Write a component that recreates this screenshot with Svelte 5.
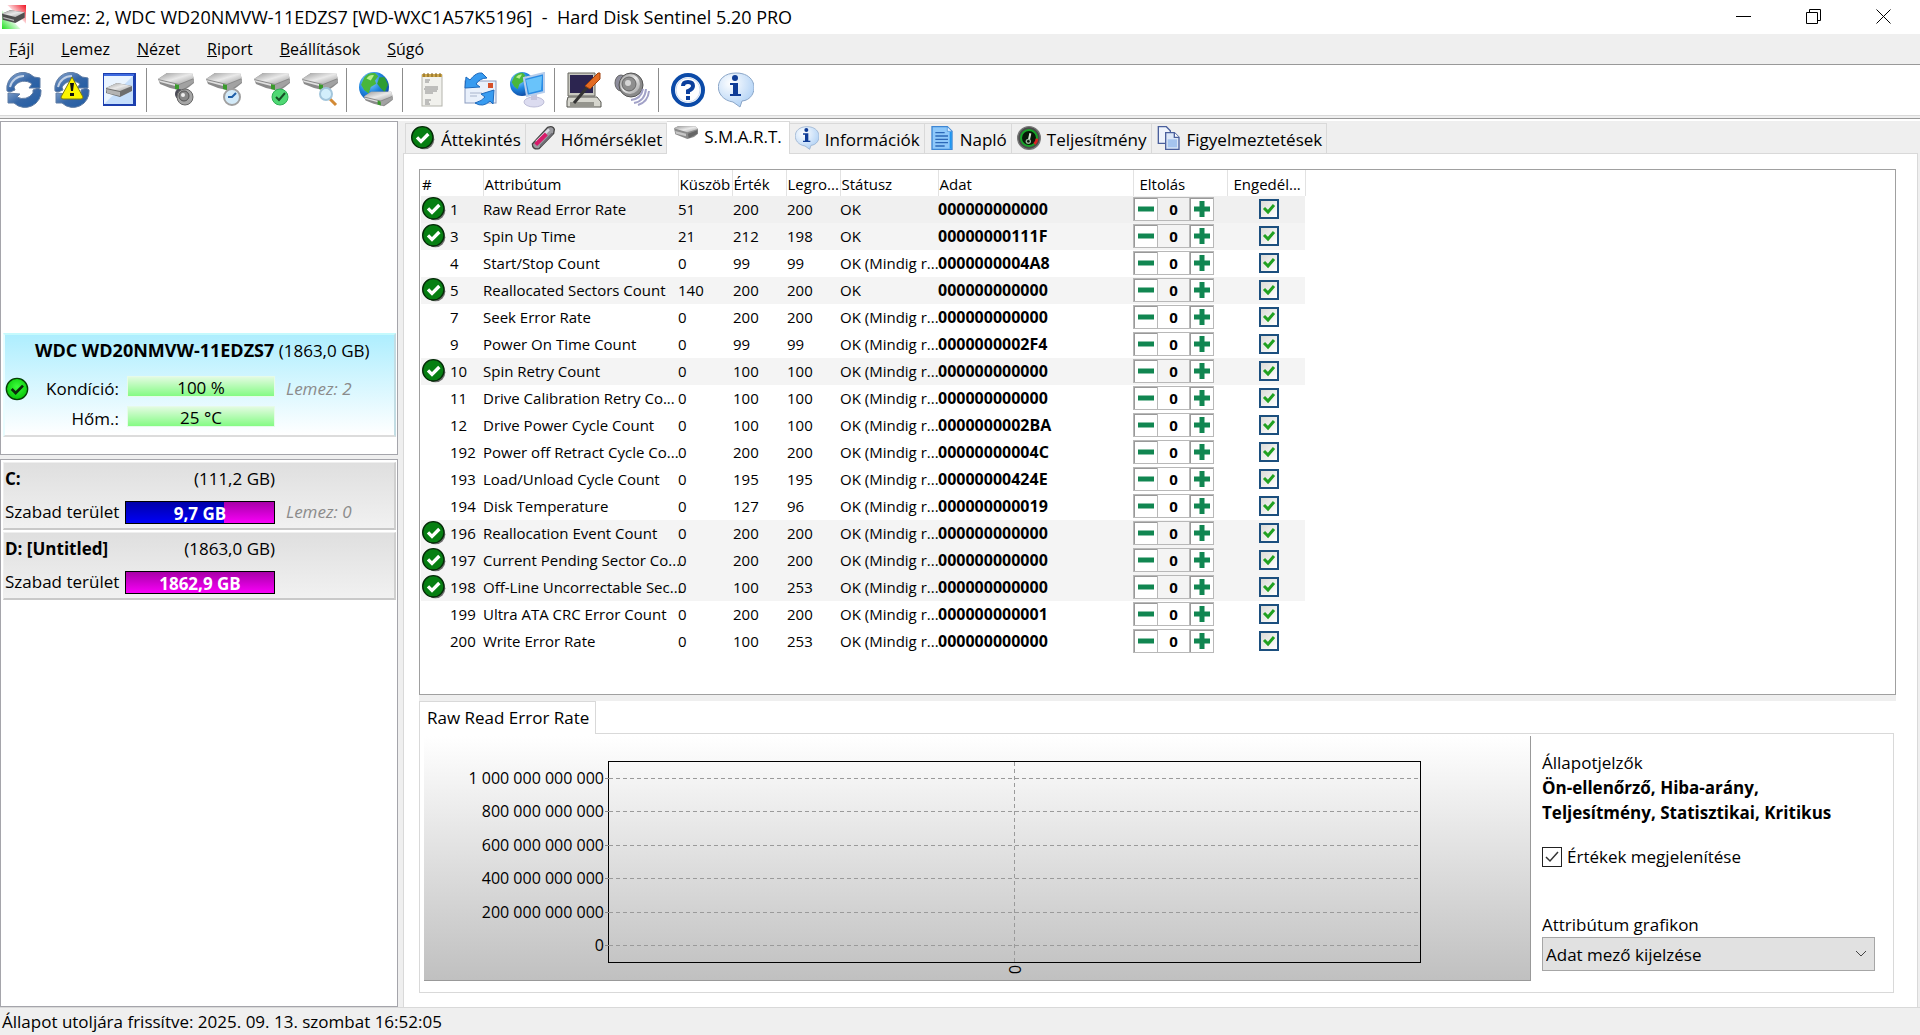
<script>
  const menu = ['Fájl', 'Lemez', 'Nézet', 'Riport', 'Beállítások', 'Súgó'];

  const toolbar = [
    [
      { icon: 'refresh', label: 'Frissítés' },
      { icon: 'refresh-warning', label: 'Újraellenőrzés' },
      { icon: 'disk-window', label: 'Lemez' }
    ],
    [
      { icon: 'disk-sound', label: 'Lemez hang' },
      { icon: 'disk-clock', label: 'Rövid teszt' },
      { icon: 'disk-check', label: 'Teljes teszt' },
      { icon: 'disk-search', label: 'Felület teszt' }
    ],
    [{ icon: 'globe-disk', label: 'Online' }],
    [
      { icon: 'report', label: 'Riport' },
      { icon: 'mail', label: 'Riport küldése' },
      { icon: 'network', label: 'Hálózat' }
    ],
    [
      { icon: 'settings', label: 'Beállítások' },
      { icon: 'speaker', label: 'Hang' }
    ],
    [
      { icon: 'help', label: 'Súgó' },
      { icon: 'info', label: 'Névjegy' }
    ]
  ];

  const tabs = [
    { icon: 'ok', label: 'Áttekintés' },
    { icon: 'thermo', label: 'Hőmérséklet' },
    { icon: 'disk', label: 'S.M.A.R.T.' },
    { icon: 'info', label: 'Információk' },
    { icon: 'log', label: 'Napló' },
    { icon: 'gauge', label: 'Teljesítmény' },
    { icon: 'copy', label: 'Figyelmeztetések' }
  ];
  let activeTab = $state('S.M.A.R.T.');

  const always = 'OK (Mindig r...';
  let attributes = $state([
    { id: 1, name: 'Raw Read Error Rate', threshold: 51, value: 200, worst: 200, status: 'OK', data: '000000000000', critical: true },
    { id: 3, name: 'Spin Up Time', threshold: 21, value: 212, worst: 198, status: 'OK', data: '00000000111F', critical: true },
    { id: 4, name: 'Start/Stop Count', threshold: 0, value: 99, worst: 99, status: always, data: '0000000004A8' },
    { id: 5, name: 'Reallocated Sectors Count', threshold: 140, value: 200, worst: 200, status: 'OK', data: '000000000000', critical: true },
    { id: 7, name: 'Seek Error Rate', threshold: 0, value: 200, worst: 200, status: always, data: '000000000000' },
    { id: 9, name: 'Power On Time Count', threshold: 0, value: 99, worst: 99, status: always, data: '0000000002F4' },
    { id: 10, name: 'Spin Retry Count', threshold: 0, value: 100, worst: 100, status: always, data: '000000000000', critical: true },
    { id: 11, name: 'Drive Calibration Retry Co...', threshold: 0, value: 100, worst: 100, status: always, data: '000000000000' },
    { id: 12, name: 'Drive Power Cycle Count', threshold: 0, value: 100, worst: 100, status: always, data: '0000000002BA' },
    { id: 192, name: 'Power off Retract Cycle Co...', threshold: 0, value: 200, worst: 200, status: always, data: '00000000004C' },
    { id: 193, name: 'Load/Unload Cycle Count', threshold: 0, value: 195, worst: 195, status: always, data: '00000000424E' },
    { id: 194, name: 'Disk Temperature', threshold: 0, value: 127, worst: 96, status: always, data: '000000000019' },
    { id: 196, name: 'Reallocation Event Count', threshold: 0, value: 200, worst: 200, status: always, data: '000000000000', critical: true },
    { id: 197, name: 'Current Pending Sector Co...', threshold: 0, value: 200, worst: 200, status: always, data: '000000000000', critical: true },
    { id: 198, name: 'Off-Line Uncorrectable Sec...', threshold: 0, value: 100, worst: 253, status: always, data: '000000000000', critical: true },
    { id: 199, name: 'Ultra ATA CRC Error Count', threshold: 0, value: 200, worst: 200, status: always, data: '000000000001' },
    { id: 200, name: 'Write Error Rate', threshold: 0, value: 100, worst: 253, status: always, data: '000000000000' }
  ].map((a) => ({ ...a, offset: 0, enabled: true })));

  let selected = $state(0);
  let showValues = $state(true);

  const drives = [
    { name: 'C:', size: '(111,2 GB)', free: '9,7 GB', used: 66, disk: 'Lemez: 0' },
    { name: 'D: [Untitled]', size: '(1863,0 GB)', free: '1862,9 GB', used: 0, disk: '' }
  ];

  const axis = ['1 000 000 000 000', '800 000 000 000', '600 000 000 000', '400 000 000 000', '200 000 000 000', '0'];
  const gridY = axis.map((_, i) => Math.round(16 + i * 33.4) + 0.5);
</script>

{#snippet drive()}
  <path d="M0 7 L9 1 H34 L36 8 V11 L31 15 L25 19 L12 16 L2 12 Z" fill="#8a8a8a" />
  <path d="M0 7 L9 1 H34 L36 6 L21 12 Z" fill="url(#g-metal)" />
  <path d="M0 8 L21 13 V15 L2 10 Z" fill="#e0e0e0" />
  <path d="M21 13 L36 7 V10 L24 18 L21 18 Z" fill="#a2a2a2" />
  <path d="M17 12 l4 1 v5 l-4 -1z" fill="#3a9a2c" />
{/snippet}

{#snippet arrows()}
  <path d="M1 19 A16 16 0 0 1 28 5 L34 6 V16 H23 L26 12 A12 12 0 0 0 8 15 L9 18 L4 20 Z" fill="url(#g-blue)" stroke="#5f7ca4" stroke-width="1" />
  <path d="M35 18 A16 16 0 0 1 8 31 L2 31 V21 L14 22 L11 25 A12 12 0 0 0 27 21 L27 18 L32 16 Z" fill="url(#g-blue)" stroke="#5f7ca4" stroke-width="1" />
  <path d="M4 15 A14 14 0 0 1 18 4" fill="none" stroke="#c3d2e6" stroke-width="2" />
{/snippet}

{#snippet globe(cx, cy, r)}
  <circle {cx} {cy} {r} fill="url(#g-globe)" />
  <g transform="translate({cx - r} {cy - r}) scale({r / 14})">
    <path d="M5 5 Q9 0 15 1 L18 4 L15 8 L16 11 L11 14 L9 20 L5 17 L2 12 Z" fill="#49b73c" />
    <path d="M19 5 L24 5 L27 12 L24 19 L20 15 L17 11 Z" fill="#2f9d33" />
    <path d="M7 6 Q10 2 14 3 L11 8 Z" fill="#b8ee8e" />
  </g>
{/snippet}

{#snippet icon(name)}
  <svg class="icon" viewBox="0 0 36 36" aria-hidden="true">
    {#if name === 'refresh'}
      {@render arrows()}
    {:else if name === 'refresh-warning'}
      {@render arrows()}
      <path d="M18 5 L29 25 Q29 27 27 27 H9 Q7 27 7 25 Z" fill="#fdf500" stroke="#7c7a12" stroke-width="1" />
      <path d="M16 11 h4 l-1 8 h-2z" fill="#111" />
      <rect x="16" y="21" width="4" height="3" fill="#111" />
    {:else if name === 'disk-window'}
      <rect x="1" y="1" width="33" height="33" fill="#1c3fae" />
      <rect x="2" y="2" width="30" height="2" fill="#3f6be0" />
      <rect x="2" y="4" width="29" height="28" fill="#c5defb" />
      <path d="M2 4 H31 L2 32Z" fill="#eaf4ff" />
      <path d="M4 16 L15 11 L30 14 V19 L18 25 L4 21Z" fill="#6e6e6e" />
      <path d="M4 16 L15 11 L30 14 L18 19Z" fill="url(#g-metal)" />
      <path d="M4 17 L18 20 V24 L5 21Z" fill="#b3b3b3" />
    {:else if name === 'disk-sound'}
      {@render drive()}
      <ellipse cx="21" cy="22" rx="4" ry="5" fill="#4a4a55" />
      <circle cx="27" cy="25" r="8" fill="#a6a6a6" stroke="#666" />
      <circle cx="26" cy="24" r="5" fill="#888" stroke="#555" />
      <circle cx="25" cy="23" r="2" fill="#eee" />
    {:else if name === 'disk-clock'}
      {@render drive()}
      <circle cx="26" cy="25" r="8" fill="#d3eaf8" stroke="#a0a0a0" stroke-width="2" />
      <path d="M30 21 L26 25 H22" fill="none" stroke="#1f5fa8" stroke-width="2" />
    {:else if name === 'disk-check'}
      {@render drive()}
      <circle cx="26" cy="25" r="8" fill="#4fd873" stroke="#2fae55" />
      <path d="M22 25 L25 28 L31 21" fill="none" stroke="#174f26" stroke-width="2" />
    {:else if name === 'disk-search'}
      {@render drive()}
      <path d="M28 27 L34 33" stroke="#d38a35" stroke-width="3" />
      <circle cx="24" cy="22" r="6" fill="#d2effc" stroke="#a3c6dc" stroke-width="2" />
    {:else if name === 'globe-disk'}
      {@render globe(16, 15, 15)}
      <g transform="translate(6 19) scale(0.8)">{@render drive()}</g>
    {:else if name === 'report'}
      <rect x="8" y="3" width="20" height="31" fill="#f1f1ed" stroke="#b4b4ac" />
      <path d="M8 2 H28 V5 H8Z" fill="#cda74c" />
      <path d="M10 1v4M14 1v4M18 1v4M22 1v4M26 1v4" stroke="#7a5c1a" />
      <path d="M11 8h5M11 10h4M11 15h13M10 17h14M11 19h12M11 21h8M11 28h6M11 30h4M11 32h5" stroke="#8a8a8a" />
    {:else if name === 'mail'}
      <rect x="3" y="9" width="31" height="22" fill="#e9f0fb" stroke="#8b9cc0" />
      <rect x="26" y="11" width="5" height="5" fill="#d6502a" />
      <path d="M8 21h12M8 24h7" stroke="#a8b4cc" />
      <path d="M3 16 L4 5 L8 8 Q14 0 20 1 L25 6 Q18 6 14 12 L18 15 Z" fill="#379bf0" stroke="#1c69bd" />
      <path d="M32 18 L19 22 L23 25 Q20 29 13 31 Q21 36 28 29 L31 32 Z" fill="#379bf0" stroke="#1c69bd" />
    {:else if name === 'network'}
      {@render globe(12, 12, 12)}
      <ellipse cx="24" cy="30" rx="10" ry="5" fill="#dcdcf0" stroke="#bdbdd8" />
      <path d="M21 22 h6 v6 h-6z" fill="#c4c4dd" />
      <path d="M14 6 L34 1 V20 L17 24 Z" fill="#2b8de6" stroke="#b8cdea" stroke-width="2" />
      <path d="M16 8 L32 4 L31 18 L19 21 Z" fill="#69c3fa" />
    {:else if name === 'settings'}
      <path d="M2 1 H29 V24 H2Z" fill="#c8c8c0" stroke="#66665f" />
      <path d="M4 3 H27 V21 H4Z" fill="#2c2550" />
      <path d="M2 25 H31 L35 30 V35 H1 V29Z" fill="#d6d6ce" stroke="#55554f" />
      <path d="M4 31h24M4 33h24" stroke="#55554f" />
      <path d="M8 31 L24 12" stroke="#333" stroke-width="3" />
      <path d="M19 14 L32 1 L34 1 V7 L24 17Z" fill="#e36b22" stroke="#a0400c" />
    {:else if name === 'speaker'}
      <ellipse cx="7" cy="11" rx="6" ry="8" fill="#8d8d9c" stroke="#666" />
      <ellipse cx="8" cy="11" rx="3" ry="5" fill="#c9c9da" />
      <circle cx="17" cy="13" r="12" fill="#8a8a8a" stroke="#555" />
      <circle cx="16" cy="12" r="10" fill="url(#g-metal)" />
      <circle cx="15" cy="12" r="7" fill="#8e8e8e" stroke="#666" />
      <circle cx="14" cy="11" r="3" fill="#d6d6d6" />
      <path d="M17 28 Q27 27 29 17 M20 31 Q31 29 32 17 M24 33 Q34 30 35 19" fill="none" stroke="#a2a2c8" stroke-width="2" />
    {:else if name === 'help'}
      <circle cx="18" cy="18" r="15" fill="#fff" stroke="#0b4aa8" stroke-width="4" />
      <circle cx="18" cy="18" r="12" fill="none" stroke="#cddcf2" stroke-width="1" />
      <path d="M13 14 Q13 10 18 10 Q23 10 23 14 Q23 17 18 19 V22" fill="none" stroke="#0b3f9c" stroke-width="4" />
      <rect x="16" y="24" width="4" height="4" fill="#0b3f9c" />
    {:else if name === 'info'}
      <path d="M18 1 C42 1 40 28 24 29 L22 35 L15 30 C-5 27 -5 1 18 1Z" fill="url(#g-bubble)" stroke="#8ba6c8" />
      <circle cx="17" cy="6" r="3" fill="#0f3c96" />
      <path d="M12 11 H20 V22 H23 V24 H12 V22 H15 V13 H12Z" fill="#0f3c96" />
    {:else if name === 'ok'}
      <circle cx="20" cy="20" r="15" fill="#6d6d6d" />
      <circle cx="17" cy="17" r="16" fill="#067f12" stroke="#052b08" stroke-width="2" />
      <path d="M9 17 L15 23 L26 12" fill="none" stroke="#fff" stroke-width="5" />
    {:else if name === 'disk-ok'}
      <circle cx="18" cy="18" r="16" fill="url(#g-green)" stroke="#053f05" stroke-width="2" />
      <path d="M10 18 L16 24 L27 13" fill="none" stroke="#0b2a0b" stroke-width="4" />
    {:else if name === 'thermo'}
      <path d="M2 27 L25 2 Q33 -1 35 5 L34 11 L12 34 Q2 36 2 27Z" fill="#9b9ba0" stroke="#444" stroke-width="2" />
      <path d="M8 24 L27 5" stroke="#dcdce4" stroke-width="4" />
      <path d="M7 28 L23 12" stroke="#d81b6a" stroke-width="6" />
      <path d="M14 30 L32 11" stroke="#6d6d74" stroke-width="3" />
    {:else if name === 'disk'}
      <path d="M0 8 L6 5 H32 L36 9 V16 L30 21 L20 24 L2 17Z" fill="#8b8b8b" />
      <path d="M0 8 L6 5 H32 L36 9 L20 14Z" fill="url(#g-metal)" />
      <path d="M2 12 L18 16 V20 L3 16Z" fill="#c6c6c6" />
      <path d="M21 16 L35 11 V16 L22 23Z" fill="#666" />
    {:else if name === 'log'}
      <path d="M3 1 H26 L33 8 V35 H3Z" fill="#8ec8fa" stroke="#3d86d4" stroke-width="2" />
      <path d="M26 1 V8 H33Z" fill="#e4f3ff" stroke="#3d86d4" />
      <path d="M8 10h14M8 15h19M8 20h19M8 25h19M8 30h14" stroke="#2c68b8" stroke-width="2" />
      <path d="M31 9 V34" stroke="#1f96f0" stroke-width="3" />
    {:else if name === 'gauge'}
      <circle cx="18" cy="18" r="17" fill="#4b4b4b" stroke="#777" stroke-width="2" />
      <circle cx="18" cy="18" r="12" fill="#081808" stroke="#16a628" stroke-width="3" />
      <path d="M26 27 A12 12 0 0 0 30 19" fill="none" stroke="#e02020" stroke-width="4" />
      <path d="M17 25 L20 11" stroke="#d9ead9" stroke-width="3" />
      <circle cx="17" cy="23" r="4" fill="#9db59d" />
      <circle cx="17" cy="23" r="2" fill="#081808" />
    {:else if name === 'copy'}
      <path d="M2 1 H14 L20 7 V26 H2Z" fill="#eef3fc" stroke="#4a5f9c" stroke-width="2" />
      <path d="M13 10 H26 L33 17 V35 H13Z" fill="#dce7f8" stroke="#4a5f9c" stroke-width="2" />
      <path d="M26 10 V17 H33" fill="#fff" stroke="#4a5f9c" stroke-width="2" />
      <path d="M16 20 H30 V32 H16Z" fill="#a5c4ee" />
    {:else if name === 'app'}
      <rect width="36" height="36" fill="#fff" />
      <path d="M8 0 H36 V28 Z" fill="url(#g-red)" />
      <path d="M0 8 V36 H28 Z" fill="url(#g-lime)" />
      <path d="M0 13 L12 8 L34 11 V19 L20 27 L1 22Z" fill="#4f4f4f" />
      <path d="M0 13 L12 8 L34 11 L20 18Z" fill="url(#g-metal)" />
      <path d="M2 18 L18 22 V24 L2 20Z" fill="#bbb" />
    {/if}
  </svg>
{/snippet}

<svg class="defs" aria-hidden="true">
  <defs>
    <linearGradient id="g-metal" x1="0" y1="0" x2="1" y2="1">
      <stop offset="0" stop-color="#9a9a9a" />
      <stop offset="0.5" stop-color="#e9e9e9" />
      <stop offset="1" stop-color="#9a9a9a" />
    </linearGradient>
    <linearGradient id="g-blue" x1="0" y1="0" x2="1" y2="1">
      <stop offset="0" stop-color="#8eaad0" />
      <stop offset="0.5" stop-color="#3566a6" />
      <stop offset="1" stop-color="#1f5ca4" />
    </linearGradient>
    <radialGradient id="g-globe" cx="0.35" cy="0.3" r="0.8">
      <stop offset="0" stop-color="#9adcff" />
      <stop offset="0.5" stop-color="#1f86e0" />
      <stop offset="1" stop-color="#0b3f98" />
    </radialGradient>
    <radialGradient id="g-bubble" cx="0.35" cy="0.3" r="0.8">
      <stop offset="0" stop-color="#fff" />
      <stop offset="1" stop-color="#a9cdf4" />
    </radialGradient>
    <radialGradient id="g-green" cx="0.5" cy="0.4" r="0.6">
      <stop offset="0" stop-color="#3cff3c" />
      <stop offset="1" stop-color="#06c406" />
    </radialGradient>
    <linearGradient id="g-red" x1="0" y1="1" x2="1" y2="0">
      <stop offset="0.4" stop-color="#fff" />
      <stop offset="1" stop-color="#f01020" />
    </linearGradient>
    <linearGradient id="g-lime" x1="1" y1="0" x2="0" y2="1">
      <stop offset="0.4" stop-color="#fff" />
      <stop offset="1" stop-color="#20e020" />
    </linearGradient>
  </defs>
</svg>

<div class="window">
  <header class="titlebar">
    <span class="app-icon">{@render icon('app')}</span>
    <h1>Lemez: 2, WDC WD20NMVW-11EDZS7 [WD-WXC1A57K5196] &nbsp;-&nbsp; Hard Disk Sentinel 5.20 PRO</h1>
    <div class="window-buttons">
      <button aria-label="Kis méret">
        <svg viewBox="0 0 16 16"><path d="M0 7.5h15" /></svg>
      </button>
      <button aria-label="Előző méret">
        <svg viewBox="0 0 16 16"><path d="M.5 3.5h11v11h-11zM3.5 3.5v-3h11v11h-3" /></svg>
      </button>
      <button aria-label="Bezárás">
        <svg viewBox="0 0 16 16"><path d="M.5.5l14 14M14.5.5l-14 14" /></svg>
      </button>
    </div>
  </header>

  <nav class="menu">
    {#each menu as item}
      <button><u>{item[0]}</u>{item.slice(1)}</button>
    {/each}
  </nav>

  <div class="toolbar">
    {#each toolbar as group}
      <div class="tool-group">
        {#each group as tool}
          <button aria-label={tool.label}>{@render icon(tool.icon)}</button>
        {/each}
      </div>
    {/each}
  </div>
  <div class="toolbar-edge"></div>

  <div class="content">
    <aside>
      <section class="disks">
        <div class="disk-card">
          <p class="disk-title"><b>WDC WD20NMVW-11EDZS7</b> (1863,0 GB)</p>
          <div class="disk-info">
            <span class="disk-state">{@render icon('disk-ok')}</span>
            <span class="label">Kondíció:</span>
            <span class="meter">100 %</span>
            <i>Lemez: 2</i>
            <span class="label temp">Hőm.:</span>
            <span class="meter">25 °C</span>
          </div>
        </div>
      </section>
      <section class="drives">
        {#each drives as d}
          <div class="drive">
            <div class="drive-head"><b>{d.name}</b><span>{d.size}</span></div>
            <div class="drive-row">
              <span class="drive-label">Szabad terület</span>
              <span class="space">
                <span class="used" style="width: {d.used}%"></span>
                <b>{d.free}</b>
              </span>
              <i>{d.disk}</i>
            </div>
          </div>
        {/each}
      </section>
    </aside>

    <main>
      <div class="tabs" role="tablist">
        {#each tabs as tab}
          <button
            role="tab"
            class:active={tab.label === activeTab}
            aria-selected={tab.label === activeTab}
            onclick={() => (activeTab = tab.label)}
          >
            {@render icon(tab.icon)}
            <span>{tab.label}</span>
          </button>
        {/each}
      </div>

      <div class="page">
        <div class="list">
          <table>
            <colgroup>
              <col class="c-id" />
              <col class="c-name" />
              <col class="c-num" />
              <col class="c-num" />
              <col class="c-num" />
              <col class="c-status" />
              <col class="c-data" />
              <col class="c-offset" />
              <col class="c-enabled" />
            </colgroup>
            <thead>
              <tr>
                <th>#</th>
                <th>Attribútum</th>
                <th>Küszöb</th>
                <th>Érték</th>
                <th>Legro...</th>
                <th>Státusz</th>
                <th>Adat</th>
                <th class="inset">Eltolás</th>
                <th class="inset">Engedél...</th>
              </tr>
            </thead>
            <tbody>
              {#each attributes as a, i}
                <tr class:critical={a.critical} class:selected={i === selected} onclick={() => (selected = i)}>
                  <td>
                    <div class="id">
                      <span class="mark">{#if a.critical}{@render icon('ok')}{/if}</span>
                      <span>{a.id}</span>
                    </div>
                  </td>
                  <td>{a.name}</td>
                  <td>{a.threshold}</td>
                  <td class="num">{a.value}</td>
                  <td class="num">{a.worst}</td>
                  <td>{a.status}</td>
                  <td class="data">{a.data}</td>
                  <td>
                    <div class="stepper">
                      <button aria-label="Csökkentés" onclick={() => a.offset--}>
                        <svg viewBox="0 0 18 18"><path d="M1 9h16" /></svg>
                      </button>
                      <span>{a.offset}</span>
                      <button aria-label="Növelés" onclick={() => a.offset++}>
                        <svg viewBox="0 0 18 18"><path d="M1 9h16M9 1v16" /></svg>
                      </button>
                    </div>
                  </td>
                  <td class="enabled">
                    <input type="checkbox" bind:checked={a.enabled} aria-label="Engedélyezve: {a.name}" />
                  </td>
                </tr>
              {/each}
            </tbody>
          </table>
        </div>

        <div class="splitter"></div>

        <div class="detail">
          <div class="detail-tabs">
            <h2>{attributes[selected].name}</h2>
            <span></span>
          </div>
          <div class="detail-body">
            <div class="chart">
              <div class="axis">
                {#each axis as label}
                  <span>{label}</span>
                {/each}
              </div>
              <div class="plot-area">
                <svg class="plot">
                  {#each gridY as y}
                    <line x1="0" x2="100%" y1={y} y2={y} />
                    <line class="tick" x1="-4" x2="0" y1={y} y2={y} />
                  {/each}
                  <line x1="50%" x2="50%" y1="0" y2="100%" />
                </svg>
                <span class="x-label">0</span>
              </div>
            </div>
            <form class="options">
              <p>Állapotjelzők<br /><b>Ön-ellenőrző, Hiba-arány, Teljesítmény, Statisztikai, Kritikus</b></p>
              <label class="check">
                <input type="checkbox" bind:checked={showValues} />
                Értékek megjelenítése
              </label>
              <label class="select-label" for="graph">Attribútum grafikon</label>
              <select id="graph">
                <option>Adat mező kijelzése</option>
              </select>
            </form>
          </div>
        </div>
      </div>
    </main>
  </div>

  <footer>Állapot utoljára frissítve: 2025. 09. 13. szombat 16:52:05</footer>
</div>

<style>
  :global(body) {
    background: #efefef;
  }

  .window {
    display: flex;
    flex-direction: column;
    box-sizing: border-box;
    min-height: 100vh;
    border-bottom: 1px solid #26323f;
    color: #000;
    font: 17px/24px 'Segoe UI', 'Open Sans', 'Noto Sans', sans-serif;
  }

  .window :global(*) {
    box-sizing: border-box;
  }

  .defs {
    position: absolute;
    width: 0;
    height: 0;
  }

  button {
    padding: 0;
    border: none;
    background: none;
    color: inherit;
    font: inherit;
  }

  .icon {
    display: block;
    width: 100%;
    height: 100%;
  }

  .titlebar {
    display: flex;
    align-items: center;
    height: 34px;
    background: #fff;
  }

  .app-icon {
    width: 24px;
    height: 24px;
    margin: 0 5px 0 2px;
  }

  h1 {
    flex: 1;
    margin: 0;
    font-size: 18px;
    font-weight: 400;
    white-space: nowrap;
  }

  .window-buttons {
    display: flex;
    padding-right: 1px;
  }

  .window-buttons button {
    width: 70px;
    height: 34px;
  }

  .window-buttons svg {
    display: block;
    width: 16px;
    height: 16px;
    margin: 0 auto;
    fill: none;
    stroke: #000;
  }

  .menu {
    display: flex;
    gap: 27px;
    height: 31px;
    padding: 0 9px;
    background: #efefef;
    border-bottom: 1px solid #999;
    font-size: 16px;
    line-height: 30px;
  }

  .toolbar {
    display: flex;
    height: 50px;
    background: #fff;
  }

  .tool-group {
    display: flex;
    align-items: center;
  }

  .tool-group + .tool-group::before {
    content: '';
    width: 1px;
    height: 44px;
    margin: 0 5px 0 2px;
    background: #8c8c8c;
  }

  .tool-group button {
    width: 48px;
    height: 36px;
  }

  .tool-group .icon {
    width: 36px;
    height: 36px;
    margin: 0 auto;
  }

  .toolbar-edge {
    height: 6px;
    border-top: 1px solid #d9d9d9;
    border-bottom: 2px solid #fff;
    background: linear-gradient(#efefef 2px, #999 2px);
  }

  .content {
    display: flex;
    flex: 1;
  }

  aside {
    display: flex;
    flex-direction: column;
    gap: 4px;
    width: 398px;
  }

  .disks,
  .drives {
    border: 1px solid #a5a5ab;
    background: #fff;
    padding: 2px 1px 2px 2px;
  }

  .disks {
    display: flex;
    flex-direction: column;
    justify-content: flex-end;
    height: 334px;
    padding-bottom: 17px;
  }

  .drives {
    flex: 1;
  }

  .disk-card {
    height: 104px;
    border: 2px solid #dcdcdc;
    border-top-color: #c5fafd;
    border-left-color: #e8fdff;
    border-right-color: #c3dde4;
    background: linear-gradient(#aeeefe, #fff);
  }

  .disk-title {
    margin: 2px 0 0 30px;
    white-space: nowrap;
    line-height: 26px;
  }

  .disk-title b {
    font-size: 18px;
  }

  .disk-info {
    display: grid;
    grid-template-columns: 24px 94px 152px 1fr;
    grid-template-rows: 30px 30px;
    align-items: center;
    margin-top: 10px;
  }

  .disk-state {
    width: 24px;
    height: 24px;
  }

  .label {
    padding-right: 4px;
    text-align: right;
  }

  .temp {
    grid-column: 2;
  }

  .meter {
    height: 21px;
    margin: 0 0 6px 4px;
    border: 1px solid #e6fbe9;
    background: linear-gradient(#e2fbe0, #84fb84);
    line-height: 22px;
    text-align: center;
  }

  i {
    padding-left: 11px;
    color: #8b8b8b;
    white-space: nowrap;
  }

  .drive {
    height: 68px;
    margin-bottom: 2px;
    border: 1px solid #efefef;
    border-right: 2px solid #cfcfcf;
    border-bottom: 2px solid #c9c9c9;
    background: linear-gradient(#dfdfdf, #f1f1f1);
  }

  .drive-head {
    display: flex;
    justify-content: space-between;
    width: 271px;
    padding: 4px 0 0 1px;
  }

  .drive-row {
    display: flex;
    align-items: center;
    padding: 9px 0 0 1px;
  }

  .drive-label {
    width: 120px;
    white-space: nowrap;
  }

  .space {
    position: relative;
    width: 150px;
    height: 23px;
    border: 1px solid #000;
    background: linear-gradient(#a800a8, #f800f8);
    color: #fff;
    line-height: 24px;
    text-align: center;
  }

  .used {
    position: absolute;
    inset: 0 auto 0 0;
    background: linear-gradient(#0000a8, #0000f8);
  }

  .space b {
    position: relative;
  }

  main {
    display: flex;
    flex: 1;
    flex-direction: column;
    min-width: 0;
    padding: 0 2px 0 5px;
  }

  .tabs {
    display: flex;
    align-items: flex-end;
    height: 32px;
    padding-left: 2px;
  }

  .tabs button {
    display: flex;
    align-items: center;
    gap: 6px;
    height: 30px;
    padding: 2px 4px 0 5px;
    border: 1px solid #d9d9d9;
    border-left: none;
    border-bottom: none;
    background: #efefef;
    white-space: nowrap;
  }

  .tabs button:first-child {
    border-left: 1px solid #d9d9d9;
  }

  .tabs .icon {
    width: 24px;
    height: 24px;
    margin-bottom: 4px;
  }

  .tabs button.active {
    position: relative;
    height: 33px;
    margin-bottom: -1px;
    padding: 0 7px 2px;
    background: #fff;
  }

  .page {
    display: flex;
    flex: 1;
    flex-direction: column;
    padding: 15px 21px 14px 15px;
    border: 1px solid #d9d9d9;
    border-bottom: none;
    background: #fff;
  }

  .list {
    flex: 1;
    min-height: 526px;
    padding-left: 1px;
    border: 1px solid #a0a0a0;
  }

  table {
    width: 884px;
    border-collapse: collapse;
    table-layout: fixed;
    font-size: 15px;
    line-height: 20px;
  }

  .c-id {
    width: 62px;
  }

  .c-name,
  .c-data {
    width: 195px;
  }

  .c-num {
    width: 54px;
  }

  .c-status {
    width: 98px;
  }

  .c-offset {
    width: 94px;
  }

  .c-enabled {
    width: 78px;
  }

  th {
    height: 26px;
    padding: 1px 0 0 1px;
    border-right: 1px solid #e2e2e2;
    font-weight: 400;
    text-align: left;
    white-space: nowrap;
  }

  th.inset {
    padding-left: 6px;
  }

  td {
    height: 27px;
    padding: 0 0 2px;
    white-space: nowrap;
  }

  .num {
    padding-left: 1px;
  }

  tr.critical {
    background: #f4f4f4;
  }

  tr.selected {
    background: #f0f0f0;
  }

  .id {
    display: flex;
    align-items: center;
  }

  .mark {
    width: 24px;
    height: 24px;
    margin: 0 4px 0 1px;
  }

  .data {
    font-size: 16px;
    font-weight: 700;
  }

  .stepper {
    display: grid;
    grid-template-columns: 23px 1fr 23px;
    grid-template-rows: 22px;
    width: 81px;
    height: 24px;
    border: 1px solid #b8b8b8;
  }

  .stepper button {
    background: #fff;
    box-shadow: inset 1px 1px #999;
  }

  .stepper svg {
    display: block;
    width: 18px;
    height: 18px;
    margin: 0 auto;
    fill: none;
    stroke: #118651;
    stroke-width: 5;
  }

  .stepper span {
    border: solid #b8b8b8;
    border-width: 0 1px;
    font-weight: 700;
    line-height: 22px;
    text-align: center;
  }

  input[type='checkbox'] {
    appearance: none;
    width: 20px;
    height: 20px;
    margin: 0;
    border: 1px solid #222;
    background: #fff;
  }

  input[type='checkbox']:checked {
    background: url("data:image/svg+xml,%3Csvg xmlns='http://www.w3.org/2000/svg' viewBox='0 0 18 18'%3E%3Cpath d='M3 9l4 4 8-9' fill='none' stroke='%23333' stroke-width='1.5'/%3E%3C/svg%3E");
  }

  .enabled {
    padding-left: 6px;
  }

  .enabled input[type='checkbox'] {
    display: block;
    margin: 0 auto;
    border: 2px solid #1c4f7e;
  }

  .enabled input[type='checkbox']:checked {
    background: url("data:image/svg+xml,%3Csvg xmlns='http://www.w3.org/2000/svg' viewBox='0 0 16 16'%3E%3Cpath d='M3 7l4 4 6-7' fill='none' stroke='%2321a121' stroke-width='3'/%3E%3C/svg%3E"),
      linear-gradient(135deg, #dcdcd7, #fff);
  }

  .splitter {
    height: 6px;
    background: #efefef;
  }

  .detail {
    margin-right: 2px;
  }

  .detail-tabs {
    display: flex;
  }

  .detail-tabs h2 {
    height: 33px;
    margin: 0;
    padding: 0 6px 0 7px;
    border: 1px solid #d9d9d9;
    border-bottom: none;
    font-size: 17px;
    font-weight: 400;
    line-height: 31px;
    white-space: nowrap;
  }

  .detail-tabs span {
    flex: 1;
    border-bottom: 1px solid #d9d9d9;
  }

  .detail-body {
    display: flex;
    padding: 2px 18px 11px 4px;
    border: 1px solid #d9d9d9;
    border-top: none;
  }

  .chart {
    display: flex;
    flex: 1;
    height: 245px;
    padding: 25px 109px 0 0;
    border-right: 1px solid #999;
    border-bottom: 1px solid #999;
    background: linear-gradient(#fff, #c0c0c0);
  }

  .axis {
    display: flex;
    flex-direction: column;
    justify-content: space-between;
    width: 184px;
    height: 187px;
    margin-top: 7px;
    padding-right: 4px;
    font-size: 16px;
    line-height: 20px;
    text-align: right;
  }

  .plot-area {
    display: flex;
    flex: 1;
    flex-direction: column;
    align-items: center;
  }

  .plot {
    width: 100%;
    height: 202px;
    border: 1px solid #000;
    overflow: visible;
  }

  .plot line {
    stroke: #9a9a9a;
    stroke-dasharray: 4 3;
    shape-rendering: crispEdges;
  }

  .plot .tick {
    stroke: #888;
    stroke-dasharray: none;
  }

  .x-label {
    margin-top: 2px;
    font-size: 16px;
    line-height: 20px;
    writing-mode: vertical-rl;
  }

  .options {
    width: 344px;
    padding-left: 11px;
    line-height: 25px;
  }

  .options p {
    margin: 14px 0 19px;
  }

  .check {
    display: flex;
    align-items: center;
    gap: 5px;
    height: 25px;
  }

  .select-label {
    display: block;
    margin: 43px 0 0;
  }

  select {
    display: block;
    appearance: none;
    width: 100%;
    height: 34px;
    padding: 0 3px;
    border: 1px solid #a6a6a6;
    border-radius: 0;
    background: #e1e1e1 url("data:image/svg+xml,%3Csvg xmlns='http://www.w3.org/2000/svg' viewBox='0 0 12 8'%3E%3Cpath d='M1 1l5 5 5-5' fill='none' stroke='%23444'/%3E%3C/svg%3E") no-repeat right 7px center / 12px 8px;
    color: #000;
    font: inherit;
  }

  footer {
    height: 28px;
    padding-left: 2px;
    border-top: 1px solid #d9d9d9;
    background: #efefef;
    line-height: 28px;
  }
</style>
